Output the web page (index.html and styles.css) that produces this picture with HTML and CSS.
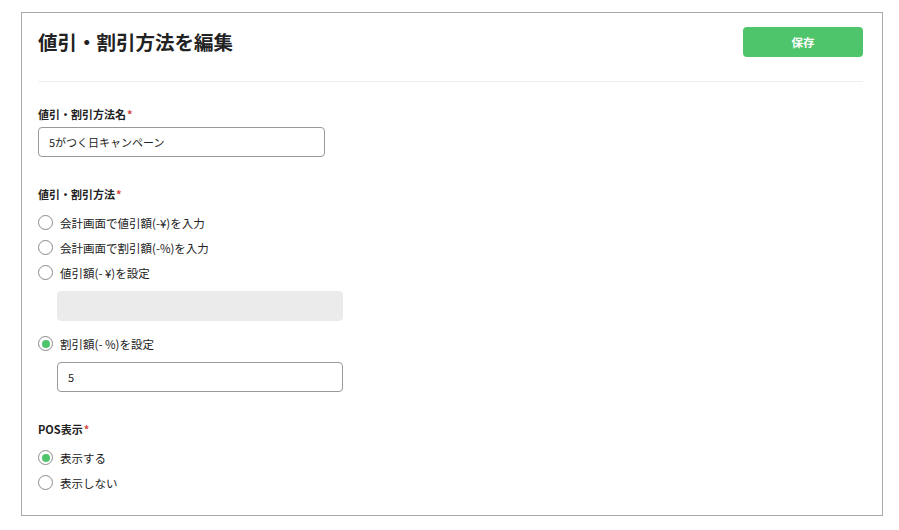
FILE: index.html
```html
<!DOCTYPE html>
<html lang="ja">
<head>
<meta charset="utf-8">
<title>値引・割引方法を編集</title>
<link rel="stylesheet" href="styles.css">
</head>
<body>
<div class="card">
  <div class="header">
    <h1 class="title">値引・割引方法を編集</h1>
    <button class="save">保存</button>
  </div>
  <div class="divider"></div>

  <div class="field first">
    <div class="label">値引・割引方法名<span class="req">*</span></div>
    <div class="input name">5がつく日キャンペーン</div>
  </div>

  <div class="field">
    <div class="label">値引・割引方法<span class="req">*</span></div>
    <div class="radios">
      <div class="radio"><span class="circle"></span><span>会計画面で値引額(-¥)を入力</span></div>
      <div class="radio"><span class="circle"></span><span>会計画面で割引額(-%)を入力</span></div>
      <div class="radio"><span class="circle"></span><span>値引額(- ¥)を設定</span></div>
    </div>
    <div class="input sub disabled"></div>
    <div class="radio spaced"><span class="circle on"></span><span>割引額(- %)を設定</span></div>
    <div class="input sub value">5</div>
  </div>

  <div class="field">
    <div class="label">POS表示<span class="req">*</span></div>
    <div class="radios">
      <div class="radio"><span class="circle on"></span><span>表示する</span></div>
      <div class="radio"><span class="circle"></span><span>表示しない</span></div>
    </div>
  </div>
</div>
</body>
</html>
```

FILE: styles.css
```css
* { box-sizing: border-box; }
html, body { margin: 0; background: #fff; }
body {
  padding: 12px 0 0 21px;
  font-family: "Noto Sans CJK JP", "Noto Sans", sans-serif;
  color: #222;
}
.card {
  width: 862px;
  height: 504px;
  border: 1px solid #a9a9a9;
  padding: 14px 19px 0 16px;
}
.header {
  height: 30px;
  display: flex;
  align-items: center;
  justify-content: space-between;
}
.title {
  margin: 0;
  font-size: 19.5px;
  font-weight: 700;
  line-height: 30px;
}
.save {
  width: 120px;
  height: 30px;
  border: none;
  border-radius: 4px;
  background: #4fc56b;
  color: #fff;
  font-family: inherit;
  font-size: 11.5px;
  font-weight: 700;
  padding: 0;
}
.divider {
  margin-top: 24px;
  height: 1px;
  background: #eeeeee;
}
.field { margin-top: 29px; }
.field.first { margin-top: 24px; }
.label {
  font-size: 11px;
  font-weight: 700;
  line-height: 16px;
}
.req { color: #d9453f; margin-left: 1px; }
.input {
  height: 30px;
  border: 1px solid #999;
  border-radius: 4px;
  font-size: 11px;
  line-height: 28px;
  padding-left: 10px;
}
.input.name { width: 287px; margin-top: 5px; }
.input.sub { width: 286px; margin-left: 19px; margin-top: 6px; }
.input.disabled { background: #ebebeb; border-color: #ebebeb; }
.radios { margin-top: 8px; }
.radio {
  display: flex;
  align-items: center;
  height: 25px;
  font-size: 11.5px;
  gap: 7px;
}
.radio.spaced { margin-top: 10px; }
.circle {
  width: 15px;
  height: 15px;
  border: 1px solid #8a8a8a;
  border-radius: 50%;
  display: flex;
  align-items: center;
  justify-content: center;
  flex: none;
}
.circle.on::after {
  content: "";
  width: 8px;
  height: 8px;
  border-radius: 50%;
  background: #4fc56b;
}
```
